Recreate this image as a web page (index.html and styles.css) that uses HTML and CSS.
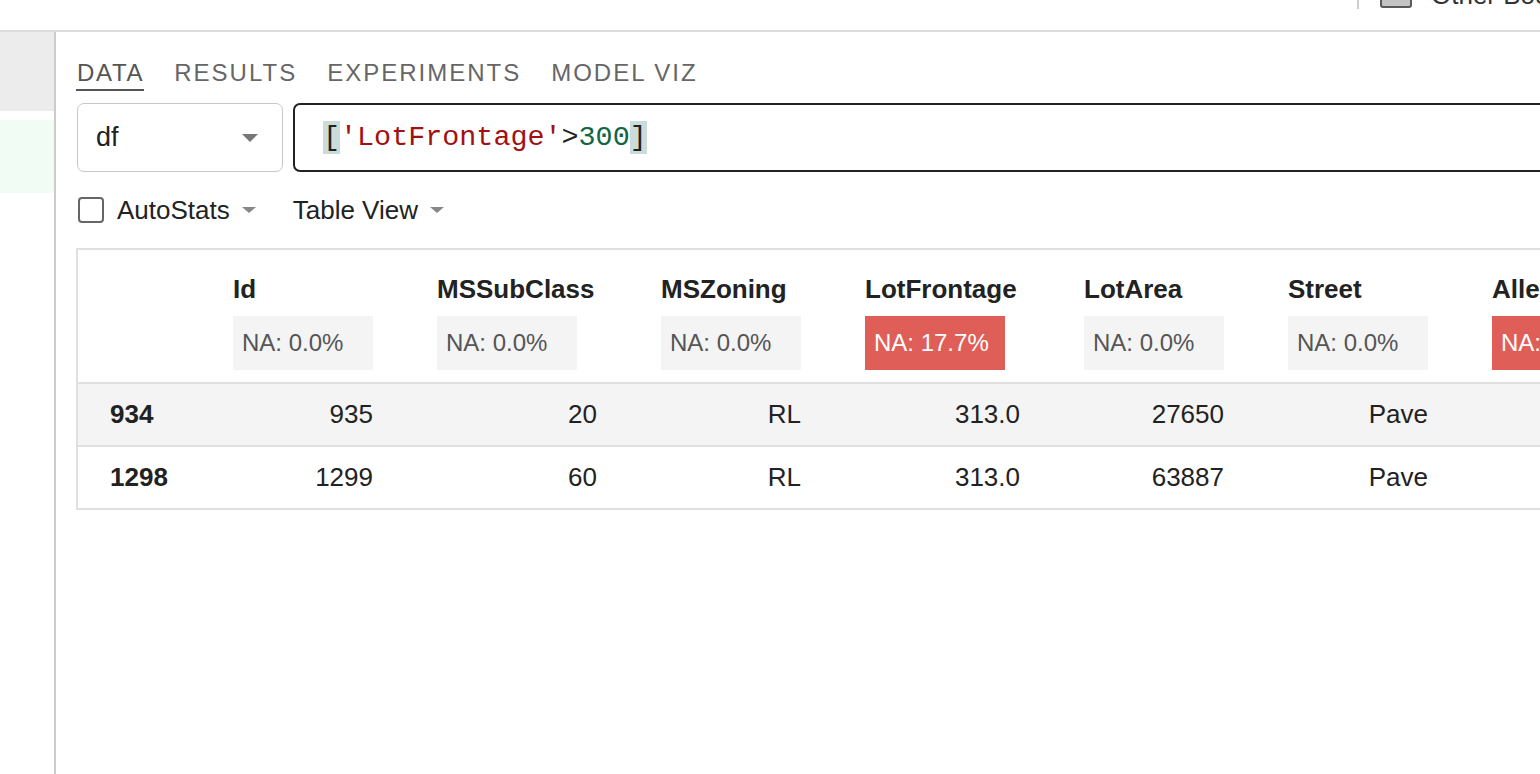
FILE: index.html
```html
<!DOCTYPE html>
<html lang="en">
<head>
<meta charset="utf-8">
<title>Data view</title>
<link rel="stylesheet" href="styles.css">
</head>
<body>
<div class="topbar">
  <div class="topbar-sep"></div>
  <div class="folder"></div>
  <div class="bookmarks">Other Bookmarks</div>
</div>
<div class="layout">
  <aside class="sidebar">
    <div class="side-item side-gray"></div>
    <div class="side-item side-green"></div>
  </aside>
  <main class="main">
    <nav class="tabs">
      <span class="tab active">DATA</span>
      <span class="tab">RESULTS</span>
      <span class="tab">EXPERIMENTS</span>
      <span class="tab">MODEL VIZ</span>
    </nav>
    <div class="query-row">
      <div class="select">
        <span class="select-value">df</span>
        <span class="caret caret-lg"></span>
      </div>
      <div class="query">
        <span class="code"><span class="match">[</span><span class="str">'LotFrontage'</span>&gt;<span class="num">300</span><span class="match">]</span></span>
      </div>
    </div>
    <div class="options">
      <span class="checkbox"></span>
      <span class="opt-label">AutoStats</span>
      <span class="caret caret-sm"></span>
      <span class="opt-label opt-gap">Table View</span>
      <span class="caret caret-sm"></span>
    </div>
    <div class="table-wrap">
      <table class="grid">
        <thead>
          <tr class="head-row">
            <th class="w-idx"></th>
            <th class="w140"><div class="col-name">Id</div><div class="na">NA: 0.0%</div></th>
            <th class="w160"><div class="col-name">MSSubClass</div><div class="na">NA: 0.0%</div></th>
            <th class="w140"><div class="col-name">MSZoning</div><div class="na">NA: 0.0%</div></th>
            <th class="w155"><div class="col-name">LotFrontage</div><div class="na na-bad">NA: 17.7%</div></th>
            <th class="w140"><div class="col-name">LotArea</div><div class="na">NA: 0.0%</div></th>
            <th class="w140"><div class="col-name">Street</div><div class="na">NA: 0.0%</div></th>
            <th class="w140"><div class="col-name">Alley</div><div class="na na-bad">NA: 93.8%</div></th>
            <th class="w140"><div class="col-name">LotShape</div><div class="na">NA: 0.0%</div></th>
          </tr>
        </thead>
        <tbody>
          <tr class="row-odd">
            <td class="idx">934</td>
            <td>935</td>
            <td>20</td>
            <td>RL</td>
            <td>313.0</td>
            <td>27650</td>
            <td>Pave</td>
            <td>NaN</td>
            <td>IR2</td>
          </tr>
          <tr class="row-even">
            <td class="idx">1298</td>
            <td>1299</td>
            <td>60</td>
            <td>RL</td>
            <td>313.0</td>
            <td>63887</td>
            <td>Pave</td>
            <td>NaN</td>
            <td>IR3</td>
          </tr>
        </tbody>
      </table>
    </div>
  </main>
</div>
</body>
</html>
```

FILE: styles.css
```css
html, body {
  margin: 0;
  padding: 0;
  height: 100%;
  overflow: hidden;
  background: #ffffff;
}
body {
  font-family: "Liberation Sans", Arial, sans-serif;
  color: #222;
  display: flex;
  flex-direction: column;
}

/* top browser bar (mostly clipped) */
.topbar {
  height: 30px;
  flex: 0 0 30px;
  border-bottom: 2px solid #dddddd;
  overflow: hidden;
  display: flex;
  align-items: flex-start;
  padding-left: 1357px;
}
.topbar > * { flex-shrink: 0; }
.topbar-sep {
  width: 2px;
  height: 9px;
  background: #cccccc;
}
.folder {
  width: 28px;
  height: 18px;
  margin-top: -14px;
  margin-left: 21px;
  background: #c4c4c4;
  border: 2px solid #5a5a5a;
  border-radius: 3px;
}
.bookmarks {
  margin-left: 19px;
  margin-top: -18px;
  font-size: 26px;
  line-height: 26px;
  color: #333;
  white-space: nowrap;
}

.layout {
  flex: 1;
  display: flex;
  min-height: 0;
}

/* left sidebar */
.sidebar {
  width: 54px;
  flex: 0 0 54px;
  border-right: 2px solid #cccccc;
  display: flex;
  flex-direction: column;
}
.side-gray {
  height: 79px;
  background: #ececec;
}
.side-green {
  height: 73px;
  margin-top: 9px;
  background: #f1fdf4;
}

/* main panel */
.main {
  flex: 0 0 1700px;
  padding-left: 20px;
  padding-top: 27px;
  box-sizing: border-box;
}

.tabs {
  display: flex;
  gap: 30px;
}
.tab {
  font-size: 24px;
  line-height: 28px;
  letter-spacing: 2px;
  color: #666666;
  padding-bottom: 2px;
  border-bottom: 2px solid transparent;
}
.tab.active {
  color: #555555;
  border-bottom-color: #555555;
  padding-left: 1px;
  letter-spacing: 1.7px;
}

.query-row {
  display: flex;
  gap: 10px;
  margin-top: 12px;
  height: 69px;
}
.select {
  width: 206px;
  box-sizing: border-box;
  border: 1.5px solid #c8c8c8;
  border-radius: 7px;
  display: flex;
  align-items: center;
  padding-left: 18px;
  padding-right: 24px;
  margin-left: 1px;
}
.select-value {
  flex: 1;
  font-size: 27px;
  color: #222;
}
.caret {
  width: 0;
  height: 0;
  border-left: 8px solid transparent;
  border-right: 8px solid transparent;
  border-top: 8px solid #777777;
}
.caret-sm {
  border-left-width: 7px;
  border-right-width: 7px;
  border-top-width: 6px;
  border-top-color: #888888;
  margin-left: 12px;
}
.query {
  flex: 1;
  box-sizing: border-box;
  border: 2px solid #222222;
  border-radius: 7px;
  display: flex;
  align-items: center;
  padding-left: 28px;
}
.code {
  font-family: "Liberation Mono", "Courier New", monospace;
  font-size: 28.4px;
  color: #222;
  white-space: pre;
}
.match { background: #c9dcd9; }
.str { color: #a11111; }
.num { color: #116644; }

.options {
  display: flex;
  align-items: center;
  margin-top: 25px;
  height: 26px;
  margin-left: 2px;
}
.checkbox {
  width: 26px;
  height: 26px;
  box-sizing: border-box;
  border: 2px solid #666666;
  border-radius: 4px;
  margin-right: 13px;
}
.opt-label {
  font-size: 26px;
  line-height: 26px;
  color: #222;
}
.opt-gap { margin-left: 37px; }

/* table */
.table-wrap {
  margin-top: 25px;
  border: 2px solid #e0e0e0;
  border-right: none;
  overflow: hidden;
}
.grid {
  border-collapse: collapse;
  width: max-content;
  font-size: 26px;
}
.grid th, .grid td {
  padding: 0 32px;
}
.grid th {
  text-align: left;
  vertical-align: top;
  padding-top: 24px;
  padding-bottom: 12px;
  font-weight: normal;
}
.head-row { border-bottom: 2px solid #e0e0e0; }
.w-idx { width: 59px; }
.w140 { width: 140px; }
.w155 { width: 155px; }
.w160 { width: 160px; }
.col-name {
  font-weight: bold;
  font-size: 26px;
  line-height: 30px;
  color: #222;
  white-space: nowrap;
  margin-bottom: 12px;
}
.na {
  width: 140px;
  height: 54px;
  box-sizing: border-box;
  padding-left: 9px;
  background: #f4f4f4;
  color: #555555;
  font-size: 24px;
  line-height: 54px;
  white-space: nowrap;
}
.na-bad {
  background: #df5e57;
  color: #ffffff;
}
.grid td {
  text-align: right;
  line-height: 31px;
  padding-top: 15px;
  padding-bottom: 15px;
  color: #222;
  white-space: nowrap;
}
.grid td.idx {
  text-align: left;
  font-weight: bold;
}
.row-odd {
  background: #f4f4f4;
  border-bottom: 2px solid #e0e0e0;
}
.row-even { background: #ffffff; }
```
